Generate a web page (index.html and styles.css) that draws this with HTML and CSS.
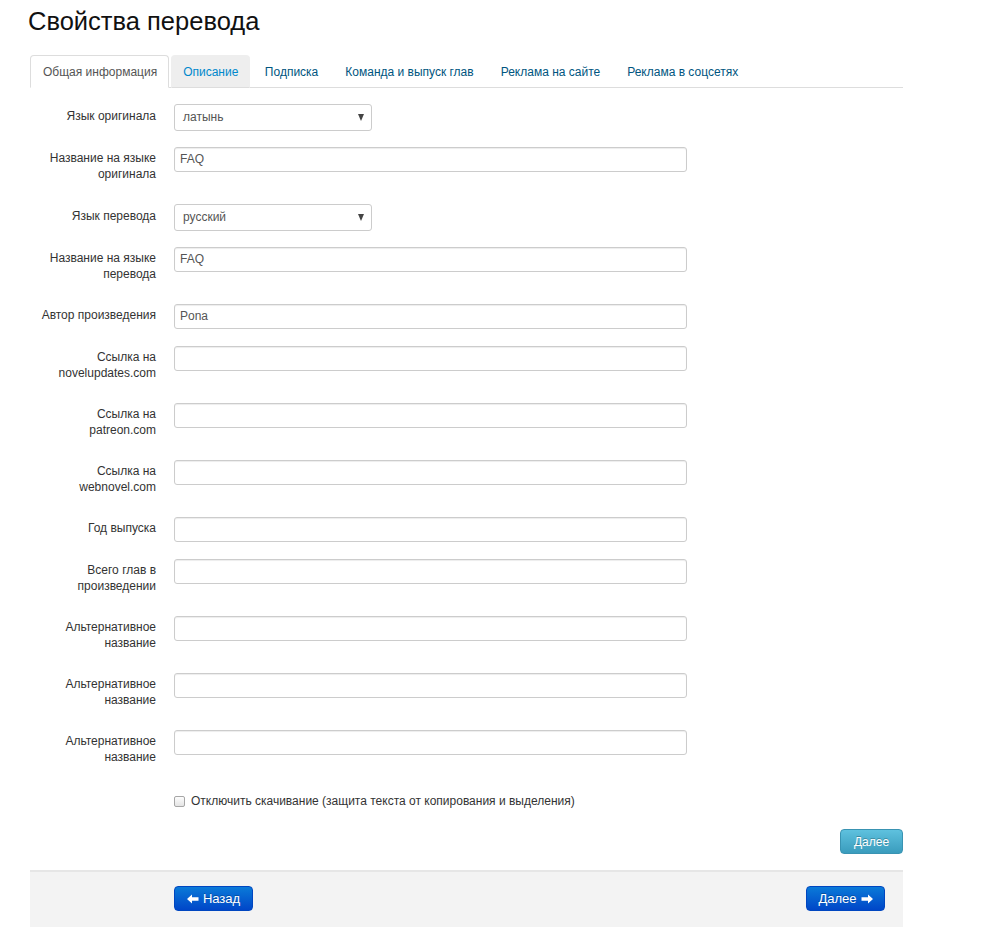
FILE: index.html
```html
<!DOCTYPE html>
<html lang="ru">
<head>
<meta charset="utf-8">
<title>Свойства перевода</title>
<link rel="stylesheet" href="styles.css">
</head>
<body>
<div class="page">
  <h1 class="title">Свойства перевода</h1>
  <ul class="tabs">
    <li class="tab active"><a>Общая информация</a></li>
    <li class="tab hover"><a>Описание</a></li>
    <li class="tab"><a>Подписка</a></li>
    <li class="tab"><a>Команда и выпуск глав</a></li>
    <li class="tab"><a>Реклама на сайте</a></li>
    <li class="tab"><a>Реклама в соцсетях</a></li>
  </ul>

  <form class="form">
    <div class="row row-select">
      <label class="label">Язык оригинала</label>
      <div class="control"><div class="select"><span>латынь</span><i class="caret"></i></div></div>
    </div>
    <div class="row">
      <label class="label">Название на языке оригинала</label>
      <div class="control"><div class="input">FAQ</div></div>
    </div>
    <div class="row row-select">
      <label class="label">Язык перевода</label>
      <div class="control"><div class="select"><span>русский</span><i class="caret"></i></div></div>
    </div>
    <div class="row">
      <label class="label">Название на языке перевода</label>
      <div class="control"><div class="input">FAQ</div></div>
    </div>
    <div class="row">
      <label class="label">Автор произведения</label>
      <div class="control"><div class="input">Pona</div></div>
    </div>
    <div class="row">
      <label class="label">Ссылка на novelupdates.com</label>
      <div class="control"><div class="input"></div></div>
    </div>
    <div class="row">
      <label class="label">Ссылка на patreon.com</label>
      <div class="control"><div class="input"></div></div>
    </div>
    <div class="row">
      <label class="label">Ссылка на webnovel.com</label>
      <div class="control"><div class="input"></div></div>
    </div>
    <div class="row">
      <label class="label">Год выпуска</label>
      <div class="control"><div class="input"></div></div>
    </div>
    <div class="row">
      <label class="label">Всего глав в произведении</label>
      <div class="control"><div class="input"></div></div>
    </div>
    <div class="row">
      <label class="label">Альтернативное название</label>
      <div class="control"><div class="input"></div></div>
    </div>
    <div class="row">
      <label class="label">Альтернативное название</label>
      <div class="control"><div class="input"></div></div>
    </div>
    <div class="row">
      <label class="label">Альтернативное название</label>
      <div class="control"><div class="input"></div></div>
    </div>
    <div class="row row-check">
      <div class="label"></div>
      <div class="control check"><span class="box"></span><span>Отключить скачивание (защита текста от копирования и выделения)</span></div>
    </div>
    <div class="next-row">
      <span class="btn btn-info">Далее</span>
    </div>
  </form>

  <div class="footer">
    <span class="btn btn-primary"><svg class="arrow" width="12" height="10" viewBox="0 0 12 10"><path d="M0 5 L5 0.5 L5 3.2 L11.5 3.2 L11.5 6.8 L5 6.8 L5 9.5 Z" fill="#fff"/></svg>Назад</span>
    <span class="btn btn-primary">Далее<svg class="arrow arrow-r" width="12" height="10" viewBox="0 0 12 10"><path d="M12 5 L7 0.5 L7 3.2 L0.5 3.2 L0.5 6.8 L7 6.8 L7 9.5 Z" fill="#fff"/></svg></span>
  </div>
</div>
</body>
</html>
```

FILE: styles.css
```css
* { box-sizing: border-box; }
body {
  margin: 0;
  background: #fff;
  font-family: "Liberation Sans", Arial, sans-serif;
  font-size: 12px;
  color: #333;
}
.page {
  width: 903px;
  padding-left: 30px;
  padding-bottom: 16px;
}
.title {
  margin: 0 0 0 -2px;
  padding-top: 5px;
  font-size: 25.5px;
  line-height: 32px;
  font-weight: normal;
  color: #111;
  height: 55px;
}
.tabs {
  list-style: none;
  margin: 0;
  padding: 0;
  display: flex;
  border-bottom: 1px solid #ddd;
  height: 33px;
}
.tab {
  margin-right: 2px;
  margin-bottom: -1px;
}
.tab a {
  display: block;
  padding: 7px 11.5px 0;
  height: 33px;
  line-height: 18px;
  color: #005580;
  border: 1px solid transparent;
  border-radius: 4px 4px 0 0;
}
.tab.active a {
  padding: 7px 11px 0 12px;
  color: #555;
  background: #fff;
  border-color: #ddd #ddd transparent;
}
.tab.hover a {
  padding: 7px 11px 0;
  color: #0088cc;
  background: #eee;
  border-color: #eee #eee #ddd;
}

.form {
  padding-top: 16px;
}
.row {
  display: grid;
  grid-template-columns: 126px 1fr;
  column-gap: 18px;
  margin-bottom: 17px;
}
.row-select { margin-bottom: 16px; }
.label {
  text-align: right;
  padding: 3px 0 5px;
  line-height: 16px;
  color: #333;
}
.row-select .label { padding-top: 4px; }
.input {
  width: 513px;
  height: 25px;
  border: 1px solid #ccc;
  border-radius: 3px;
  padding: 0 5px;
  line-height: 23px;
  color: #555;
  box-shadow: inset 0 1px 1px rgba(0,0,0,0.075);
}
.select {
  width: 198px;
  height: 27px;
  border: 1px solid #ccc;
  border-radius: 3px;
  padding: 0 8px;
  line-height: 27px;
  color: #555;
  display: flex;
  justify-content: space-between;
  align-items: center;
  background: #fff;
}
.caret {
  width: 0;
  height: 0;
  border-left: 3.5px solid transparent;
  border-right: 3.5px solid transparent;
  border-top: 7px solid #444;
  margin-right: -1px;
}
.row-check { margin-top: 22px; margin-bottom: 0; }
.check {
  display: flex;
  align-items: center;
  height: 18px;
  color: #333;
}
.box {
  width: 11px;
  height: 11px;
  border: 1px solid #a6a6a6;
  border-radius: 2px;
  background: linear-gradient(#fdfdfd, #e4e4e4);
  margin-right: 6px;
  margin-top: 1px;
}
.next-row {
  display: flex;
  justify-content: flex-end;
  margin-top: 19px;
  padding-bottom: 16px;
}
.btn {
  display: inline-flex;
  align-items: center;
  justify-content: center;
  height: 25px;
  border-radius: 4px;
  color: #fff;
  font-size: 12px;
  text-shadow: 0 -1px 0 rgba(0,0,0,0.25);
}
.btn-info {
  width: 63px;
  background: linear-gradient(#5ec1de, #3a9cbd);
  border: 1px solid #3993b2;
}
.btn-primary {
  width: 79px;
  background: linear-gradient(#0a7ad8, #0046c8);
  border: 1px solid #0046c0;
  font-size: 13px;
}
.arrow { margin-right: 4px; }
.arrow-r { margin-right: 0; margin-left: 4px; }
.footer {
  background: #f3f3f3;
  border-top: 2px solid #e6e6e6;
  height: 57px;
  display: flex;
  justify-content: space-between;
  align-items: flex-start;
  padding: 14px 18px 0 144px;
}
```
